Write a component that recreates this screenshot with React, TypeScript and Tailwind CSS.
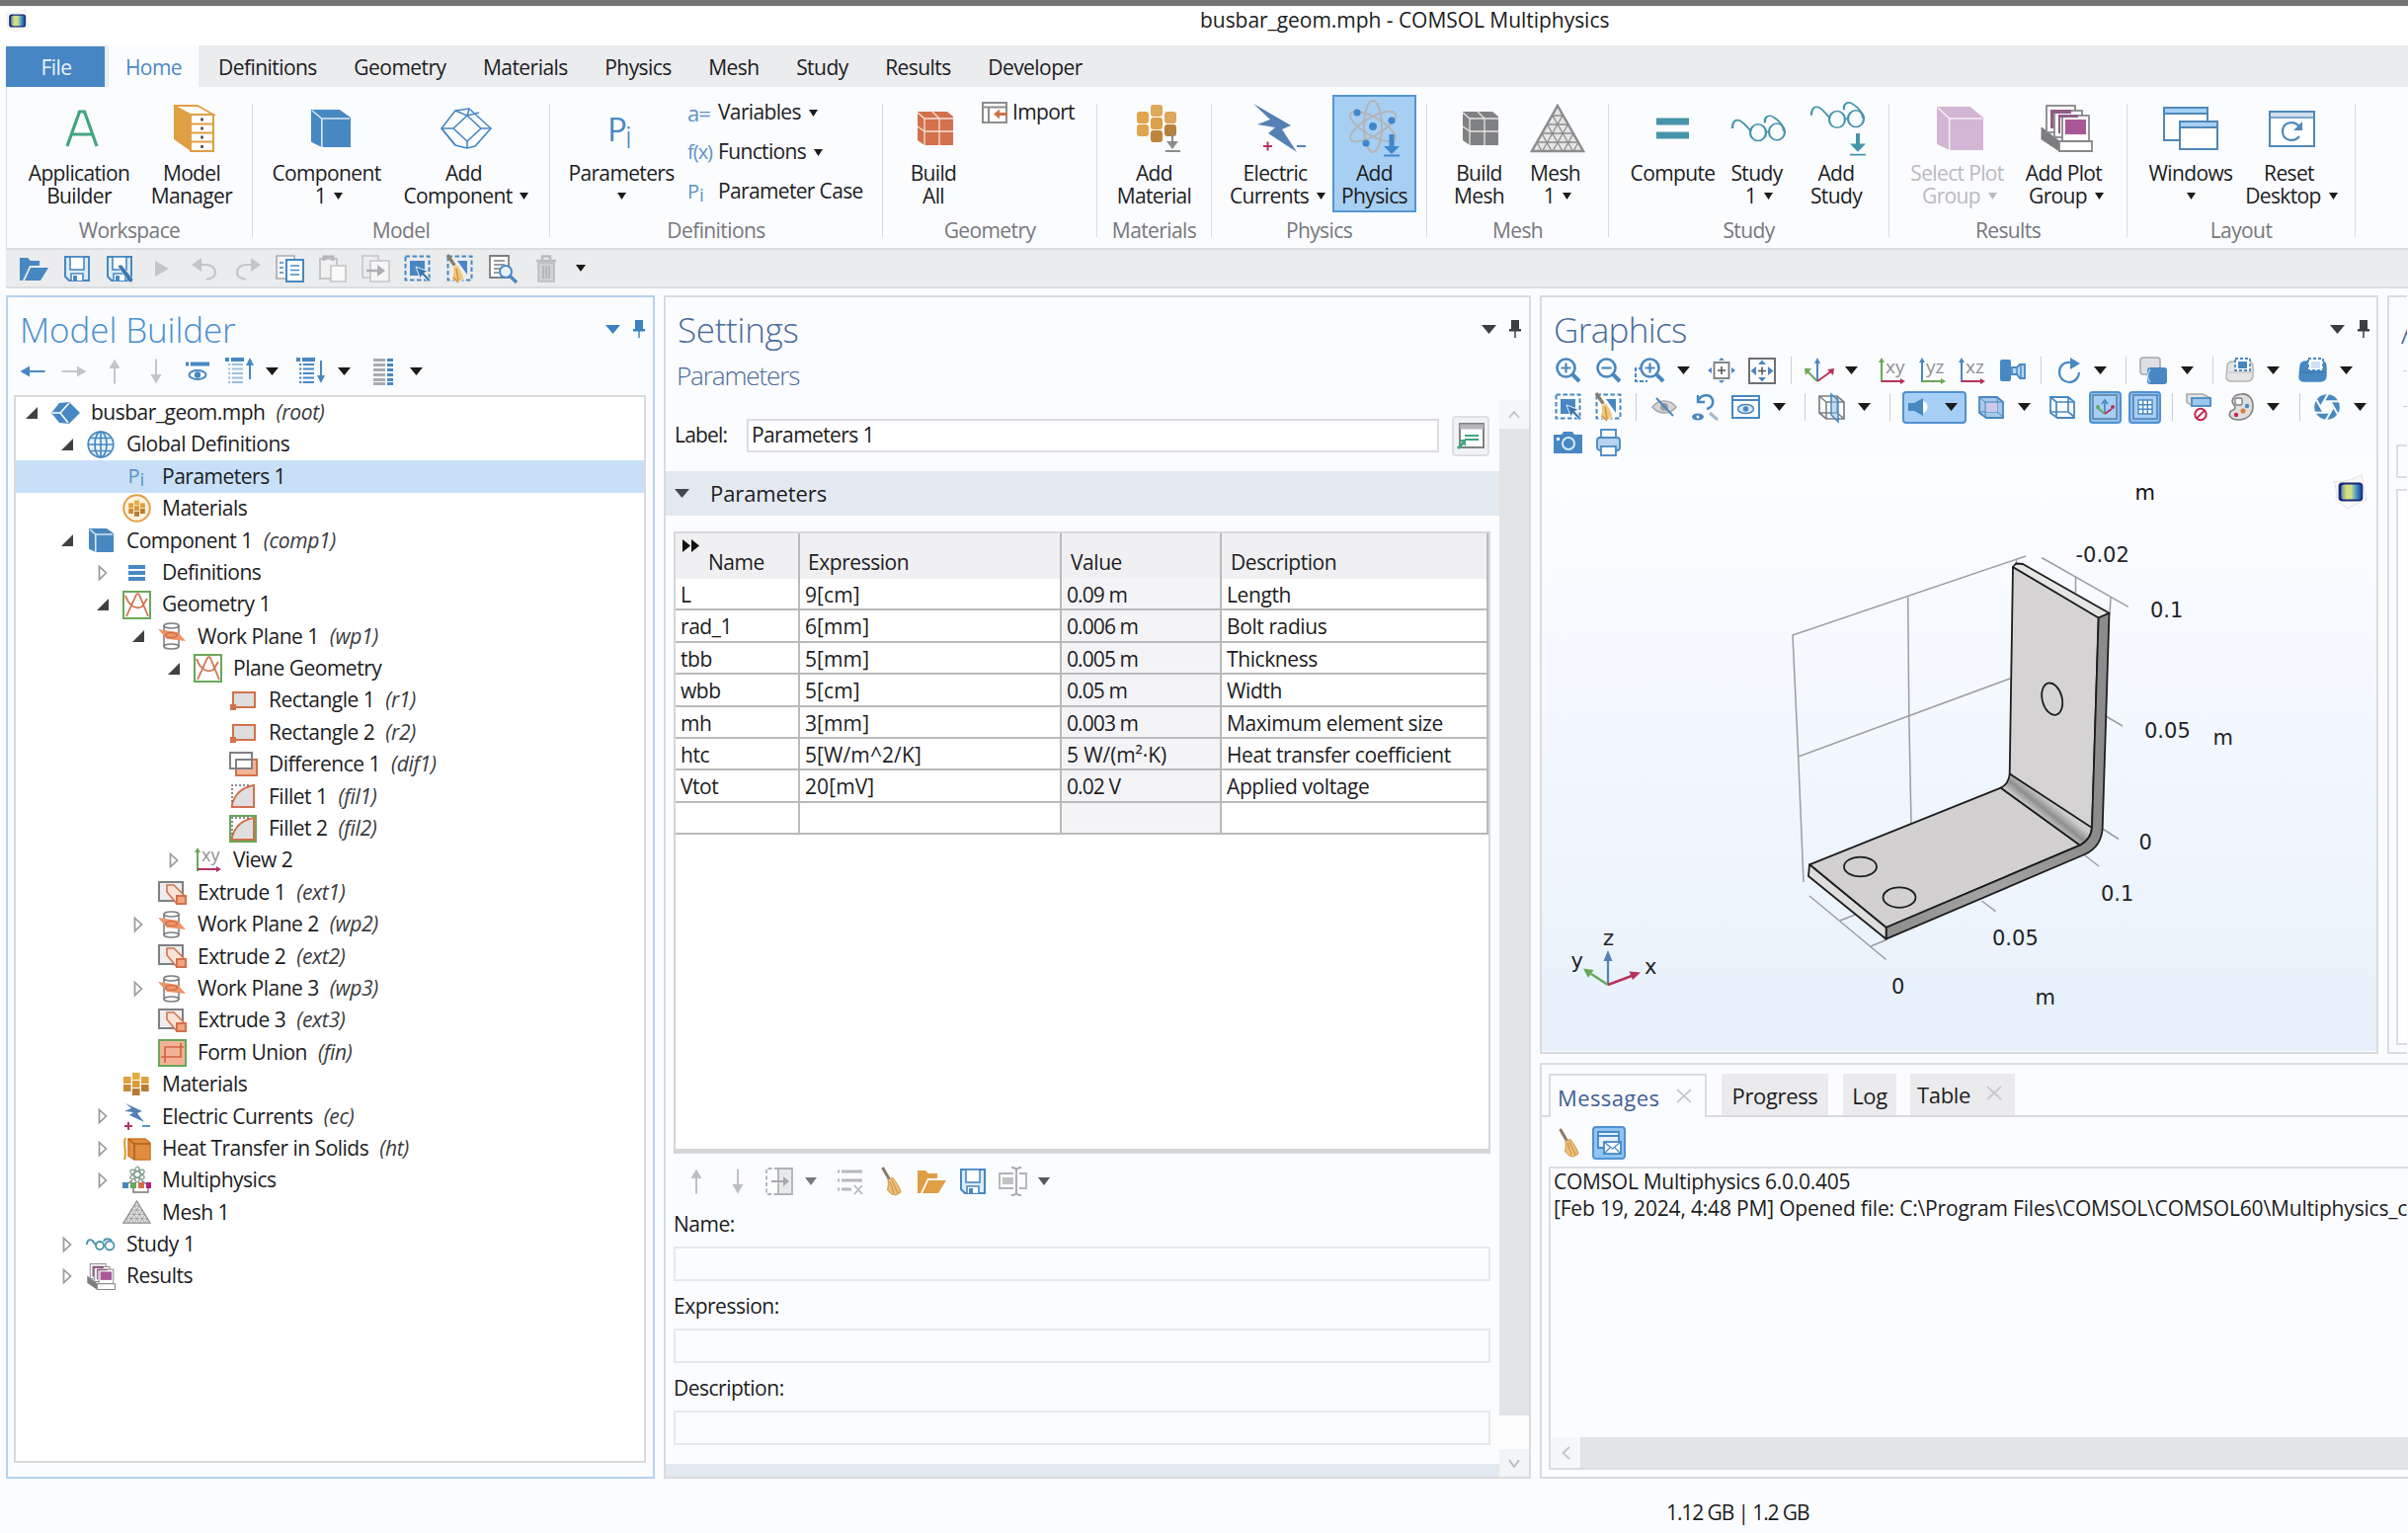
import type { ReactNode } from 'react';

const BLUE = '#4788c2';
const GRAY = '#8b8c8e';
const PALE = '#c3c5c8';
const ORANGE = '#df9f45';
const RUST = '#d2714c';
const TEAL = '#4694ab';
const MAGENTA = '#b8315f';
const GREEN = '#68a858';

function Svg({ w, h, children }: { w: number; h: number; children: ReactNode }) {
  return (
    <svg width={w} height={h} viewBox={`0 0 ${w} ${h}`} fill="none" className="shrink-0 overflow-visible">
      {children}
    </svg>
  );
}

/* ---------- small shared glyphs ---------- */

function Caret({ color = '#1b1b1b', w = 9, h = 7 }: { color?: string; w?: number; h?: number }) {
  return (
    <Svg w={w} h={h}>
      <path d={`M0 0H${w}L${w / 2} ${h}Z`} fill={color} />
    </Svg>
  );
}

function Pin({ color }: { color: string }) {
  return (
    <Svg w={13} h={18}>
      <path d="M3 0H11V9H13V11.500H1V9H3Z" fill={color} />
      <path d="M7 11V18" stroke={color} strokeWidth="1.500" />
    </Svg>
  );
}

function Arrow({ dir, color }: { dir: 'left' | 'right' | 'up' | 'down'; color: string }) {
  const turn = { up: 0, right: 90, down: 180, left: 270 }[dir];
  return (
    <Svg w={26} h={26}>
      <g transform={`rotate(${turn} 13 13)`}>
        <path d="M13 6V25.500" stroke={color} strokeWidth="2" />
        <path d="M13 0.500L18.500 10H7.500Z" fill={color} />
      </g>
    </Svg>
  );
}

function Logo({ s = 32 }: { s?: number }) {
  return (
    <svg width={s} height={s} viewBox="0 0 40 40" fill="none" className="shrink-0">
      <defs>
        <linearGradient id="logo" x1="9" y1="20" x2="34" y2="20" gradientUnits="userSpaceOnUse">
          <stop offset="0" stopColor="#3f78b8" />
          <stop offset="0.300" stopColor="#d6e07a" />
          <stop offset="0.500" stopColor="#cfdc8c" />
          <stop offset="0.750" stopColor="#3b8ec8" />
          <stop offset="1" stopColor="#142a80" />
        </linearGradient>
      </defs>
      <path d="M3 9C14 10 22 7 33 2C34 14 37 22 38 29C30 31 24 34 18 38C14 34 8 32 5 28C7 22 5 15 3 9Z" fill="#f9f9f8" stroke="#e2e2df" />
      <rect x="8" y="10" width="26" height="20" rx="4" fill="#16287c" />
      <rect x="11" y="12" width="22" height="16" rx="3" fill="url(#logo)" />
    </svg>
  );
}

function Broom({ small = false }: { small?: boolean }) {
  return (
    <Svg w={small ? 20 : 22} h={30}>
      <path d="M1.500 1L9 14" stroke="#8a7a68" strokeWidth="3" />
      <path d="M7 13L12 11.500C15 16 19 21 20 26L15 29L11 28L6.500 24C7.500 20 7.500 16 7 13Z" fill="#ecc27a" stroke="#cf9340" strokeWidth="1" />
      <path d="M9 15L13 27M11 14L17 27" stroke="#c98a3c" />
    </Svg>
  );
}

function Floppy({ pen = false }: { pen?: boolean }) {
  return (
    <Svg w={28} h={28}>
      <path d="M2 2H26V26H6L2 22Z" fill="#dcebf8" stroke={BLUE} strokeWidth="2" />
      <rect x="7" y="2" width="14" height="13" fill="#fff" stroke={BLUE} strokeWidth="1.600" />
      <path d="M8 26V19H20V26" fill="#fff" stroke={BLUE} strokeWidth="1.600" />
      <rect x="10" y="21" width="4" height="5" fill={BLUE} />
      {pen && <path d="M12 11L16 10L28 25L26 28L23 27Z" fill="#3b76ae" stroke="#e9eef4" strokeWidth="0.600" />}
    </Svg>
  );
}

function Folder({ color }: { color: string }) {
  return (
    <Svg w={29} h={24}>
      <path d="M0 1H8L11 4H20V9H10L3 24H0Z" fill={color} />
      <path d="M11 11H29L21 24H5Z" fill={color} />
    </Svg>
  );
}

function SelectBox({ broom = false }: { broom?: boolean }) {
  return (
    <Svg w={28} h={28}>
      <rect x="1.500" y="1.500" width="24" height="24" stroke={BLUE} strokeWidth="2" strokeDasharray="4.500 2.500" />
      {broom ? (
        <>
          <path d="M11 6H21V20Z" fill={BLUE} />
          <path d="M1 0L9 12" stroke="#8a7a68" strokeWidth="3.200" />
          <path d="M6 12L11 10C14 14 17 19 18 24L12 28L5 24C7 19 7 16 6 12Z" fill="#efc780" stroke="#fff" strokeWidth="0.800" />
          <path d="M10 14L12 26M7 23L12 28" stroke="#cf9340" strokeWidth="1.500" />
        </>
      ) : (
        <>
          <rect x="6" y="6" width="15" height="15" fill={BLUE} />
          <path d="M12 12L24 16.500L20.500 18.500L27 25.500L25 27.500L18.500 20.500L16.500 24Z" fill="#3b76ae" stroke="#eaf2fa" strokeWidth="1" />
        </>
      )}
    </Svg>
  );
}

/* ---------- ribbon icons ---------- */

function CubeSolid({ fill, w, h, top = 8 }: { fill: string; w: number; h: number; top?: number }) {
  return (
    <Svg w={w} h={h}>
      <path d={`M0 0H${w * 0.72}L${w} ${top}V${h}H${w * 0.27}L0 ${h * 0.86}Z`} fill={fill} />
      <path d={`M1 1L${w * 0.27} ${top + 1}H${w - 1}M${w * 0.27} ${top + 1}V${h}`} stroke="#fff" strokeWidth="1.600" opacity="0.8" />
    </Svg>
  );
}

function GridCube({ fill }: { fill: string }) {
  return (
    <Svg w={38} h={36}>
      <path d="M1 1H31L37 6V35H8L1 30Z" fill={fill} />
      <path d="M1 2L8 8H37M8 8V35M23 8V35M8 21H37M1 16L8 21M16 1L23 8" stroke="#fff" strokeWidth="1.300" opacity="0.8" />
    </Svg>
  );
}

function Cabinet() {
  return (
    <Svg w={42} h={48}>
      <path d="M1 1L18 10V47L1 35Z" fill={ORANGE} />
      <path d="M1 1H25L41 10H18Z" fill="#fff" stroke={ORANGE} strokeWidth="1.800" />
      <rect x="18" y="10" width="23" height="37" fill="#fff" stroke={ORANGE} strokeWidth="2" />
      <path d="M18 19.500H41M18 28.500H41M18 37.500H41" stroke={ORANGE} strokeWidth="2" />
      <path d="M29.500 13.500V16.500M29.500 22.500V25.500M29.500 31.500V34.500M29.500 41V44" stroke="#444" strokeWidth="2.500" />
    </Svg>
  );
}

function DiamondCube() {
  return (
    <Svg w={52} h={42}>
      <g stroke={BLUE} strokeWidth="1.600">
        <path d="M1 21L15 3L29 1L51 21L35 39L27 41L15 38Z" />
        <path d="M1 21L15 38M27 8L41 21L27 34L13 21ZM1 21H13M41 21H51M29 1L27 8L15 3M27 34V41M27 8L39 5" />
      </g>
    </Svg>
  );
}

function HexMaterial() {
  const cells: [number, number, string][] = [
    [14, 0, '#e0a85a'], [0, 7, '#e2a44c'], [28, 7, '#dda75c'], [14, 13, '#dba04a'],
    [0, 20, '#dfa44e'], [28, 20, '#b8813b'], [14, 26, '#c0843a'],
  ];
  return (
    <Svg w={44} h={48}>
      {cells.map(([x, y, c]) => (
        <rect key={`${x}-${y}`} x={x} y={y} width="12" height="12" rx="3" fill={c} />
      ))}
      <path d="M36 28V44M29 47H44" stroke={GRAY} strokeWidth="2.200" />
      <path d="M30 37H42L36 45Z" fill={GRAY} />
    </Svg>
  );
}

function Lightning() {
  return (
    <Svg w={54} h={50}>
      <path d="M0 0L38 22L29 26L44 49L15 30L22 24L4 21L17 16Z" fill="#5580b4" />
      <path d="M10 43H19M14.500 38.500V47.500" stroke={MAGENTA} strokeWidth="2" />
      <path d="M44 43H53" stroke="#5580b4" strokeWidth="2" />
    </Svg>
  );
}

function Atom() {
  return (
    <Svg w={52} h={58}>
      <g stroke="#b3b5b8" strokeWidth="2">
        <ellipse cx="24" cy="27" rx="9" ry="26" />
        <ellipse cx="24" cy="27" rx="9" ry="26" transform="rotate(60 24 27)" />
        <ellipse cx="24" cy="27" rx="9" ry="26" transform="rotate(-60 24 27)" />
      </g>
      <g fill="#3f86cc">
        <circle cx="24" cy="27" r="4" />
        <circle cx="8" cy="13" r="3.600" />
        <circle cx="43" cy="21" r="3.600" />
        <circle cx="17" cy="44" r="3.600" />
        <path d="M40.500 35H45.500V47H51L43 55L35 47H40.500Z" />
      </g>
      <path d="M35 56.500H51" stroke="#3f86cc" strokeWidth="2" />
    </Svg>
  );
}

function MeshTriangle({ w, h }: { w: number; h: number }) {
  return (
    <svg width={w} height={h} viewBox="0 0 56 50" fill="none" preserveAspectRatio="none" className="shrink-0">
      <path d="M28 2L54 48H2Z" fill="#e4e4e5" stroke={GRAY} strokeWidth="2.500" />
      <path d="M23 12H33M17.500 21H38.500M12 30H44M7 39H49M33 12L12.500 48M38.500 21L23 48M44 30L34 48M49 39L44 48M23 12L43.500 48M17.500 21L33 48M12 30L22 48M7 39L12 48" stroke={GRAY} strokeWidth="1.300" />
    </svg>
  );
}

function Glasses({ down = false }: { down?: boolean }) {
  return (
    <Svg w={56} h={down ? 80 : 42}>
      <g stroke={TEAL} strokeWidth="2.200">
        <path d="M1 21C1 11 4 7 9 10C14 14 16 20 20 25M34 13C33 4 38 0 43 5C49 10 53 18 53 25" />
        <ellipse cx="27" cy="27" rx="8" ry="12" />
        <ellipse cx="46" cy="26" rx="8" ry="12" />
        <path d="M35 26H38" />
      </g>
      {down && (
        <>
          <path d="M46 47H50V62H56L48 74L40 62H46Z" fill={TEAL} />
          <path d="M40 78H56" stroke={TEAL} strokeWidth="2.500" />
        </>
      )}
    </Svg>
  );
}

function PlotStack({ w = 53, h = 48 }: { w?: number; h?: number }) {
  return (
    <svg width={w} height={h} viewBox="0 0 53 48" fill="none" preserveAspectRatio="none" className="shrink-0">
      <path d="M1 23L19 37V47L1 35Z" fill="#7d7d80" stroke="#7d7d80" />
      <g fill="#fff" stroke="#88888b" strokeWidth="1.800">
        <rect x="6" y="1" width="29" height="27" />
        <rect x="14" y="6" width="28" height="27" />
        <rect x="22" y="11" width="27" height="26" />
      </g>
      <path d="M10 5H31V9H13V24H10ZM18 10H38V13H20V29H18Z" fill="#8f5d86" />
      <rect x="25" y="15" width="21" height="15" fill="#a85898" />
      <path d="M19 37H52V47H19Z" fill="#fff" stroke="#88888b" strokeWidth="1.800" />
    </svg>
  );
}

function WindowsIcon() {
  return (
    <Svg w={56} h={44}>
      <g stroke="#5088b8" strokeWidth="2">
        <rect x="1" y="1" width="44" height="33" fill="#fff" />
        <rect x="1" y="1" width="44" height="6" fill="#a6d0f5" />
        <rect x="17" y="15" width="38" height="28" fill="#fff" />
        <rect x="17" y="15" width="38" height="6" fill="#a6d0f5" />
      </g>
    </Svg>
  );
}

function ResetIcon() {
  return (
    <Svg w={47} h={37}>
      <rect x="1" y="1" width="45" height="35" fill="#fff" stroke="#5088b8" strokeWidth="2" />
      <path d="M2 2H45V6H2Z" fill="#cfdff0" />
      <path d="M1 7H46" stroke="#5088b8" strokeWidth="1.500" />
      <path d="M31 26C25 33 14 30 14 21C14 12 25 9 31 16" stroke="#5088b8" strokeWidth="2.200" />
      <path d="M34 11V20H25Z" fill="#5088b8" />
    </Svg>
  );
}

function ImportIcon() {
  return (
    <Svg w={26} h={22}>
      <rect x="1" y="1" width="24" height="20" fill="#fff" stroke={GRAY} strokeWidth="2" />
      <path d="M1 5.500H25M7 6V21" stroke={GRAY} strokeWidth="2" />
      <path d="M12 12.500L18 7.500V11H26V14H18V17.500Z" fill={RUST} />
    </Svg>
  );
}

function Pi({ big = false }: { big?: boolean }) {
  return big ? (
    <span className="flex leading-none text-[#4788c2]">
      <span className="text-[33px]">P</span>
      <span className="-ml-0.5 translate-y-2 text-[32px] font-light">i</span>
    </span>
  ) : (
    <span className="flex text-[20px] leading-none text-[#5b92c8]">
      P<span className="translate-y-1 text-[19px]">i</span>
    </span>
  );
}

/* ---------- ribbon ---------- */

function BigButton({
  icon, lines, className, arrow = false, active = false, muted = false,
}: { icon: ReactNode; lines: [string, string?]; className: string; arrow?: boolean; active?: boolean; muted?: boolean }) {
  const tone = muted ? 'text-[#b9babd]' : 'text-[#1c1c1e]';
  const frame = active ? 'border-[#5296d6] bg-[#a7cff3]' : 'border-transparent';
  return (
    <button className={`flex h-[119px] shrink-0 flex-col items-center border-2 ${frame} ${tone} ${className}`}>
      <span className="flex h-[65.5px] items-center justify-center pb-[1.5px]">{icon}</span>
      <span className={`whitespace-nowrap text-[21px] leading-[23.4px] tracking-[-0.65px] ${arrow && lines[1] ? 'pr-[5px]' : ''}`}>{lines[0]}</span>
      <span className="flex h-[23.4px] items-center whitespace-nowrap text-[21px] leading-[23.4px] tracking-[-0.65px]">
        {lines[1]}
        {arrow && (
          <span className={lines[1] ? 'ml-[8px]' : ''}>
            <Caret color={muted ? '#b9babd' : '#1b1b1b'} />
          </span>
        )}
      </span>
    </button>
  );
}

function Group({ name, className, children }: { name: string; className: string; children: ReactNode }) {
  return (
    <section className={`flex h-full shrink-0 flex-col ${className}`}>
      <div className="flex h-[128px] pt-2">{children}</div>
      <div className="h-9 text-center text-[21px] leading-9 tracking-[-0.6px] text-[#77787b]">{name}</div>
    </section>
  );
}

function Divider() {
  return <div className="mt-[17px] h-[135px] w-px shrink-0 bg-[#d9dadc]" />;
}

function SmallCommand({ icon, label, arrow = false }: { icon: ReactNode; label: string; arrow?: boolean }) {
  return (
    <div className="flex h-10 items-center">
      <span className="flex w-[31px] shrink-0 items-center">{icon}</span>
      <span className="whitespace-nowrap text-[21px] tracking-[-0.65px] text-[#1c1c1e]">{label}</span>
      {arrow && <span className="ml-2"><Caret /></span>}
    </div>
  );
}

function Ribbon() {
  return (
    <div className="ml-[6px] flex h-[163px] shrink-0 border-l border-[#d9dadc]">
      <Group name="Workspace" className="w-[248px]">
        <BigButton className="ml-[11px] w-[124px]" icon={<span className="ml-[6px]"><Svg w={32} h={36}><path d="M1 36L13.500 1H18.500L31 36M6 24H26" stroke="#42a583" strokeWidth="3.200" /></Svg></span>} lines={['Application', 'Builder']} />
        <BigButton className="w-[104px]" icon={<span className="ml-1"><Cabinet /></span>} lines={['Model', 'Manager']} />
      </Group>
      <Divider />
      <Group name="Model" className="w-[300px]">
        <BigButton className="ml-[12px] w-[130px]" icon={<span className="ml-[3px]"><CubeSolid fill={BLUE} w={40} h={38} /></span>} lines={['Component', '1']} arrow />
        <BigButton className="w-[148px]" icon={<DiamondCube />} lines={['Add', 'Component']} arrow />
      </Group>
      <Divider />
      <Group name="Definitions" className="w-[336px]">
        <BigButton className="ml-[12px] w-[120px]" icon={<span className="mr-[3px]"><Pi big /></span>} lines={['Parameters']} arrow />
        <div className="ml-[7px] -mt-[2px]">
          <SmallCommand icon={<span className="text-[22px] leading-none tracking-[-1px] text-[#5b92c8]">a=</span>} label="Variables" arrow />
          <SmallCommand icon={<span className="text-[20px] leading-none tracking-[-1px] text-[#5b92c8]">f(x)</span>} label="Functions" arrow />
          <SmallCommand icon={<Pi />} label="Parameter Case" />
        </div>
      </Group>
      <Divider />
      <Group name="Geometry" className="w-[216px]">
        <BigButton className="ml-[11px] w-[80px]" icon={<span className="ml-[3px]"><GridCube fill={RUST} /></span>} lines={['Build', 'All']} />
        <div className="ml-[9px] -mt-[2px]">
          <SmallCommand icon={<ImportIcon />} label="Import" />
        </div>
      </Group>
      <Divider />
      <Group name="Materials" className="w-[115px]">
        <BigButton className="w-[115px]" icon={<span className="ml-[8px]"><HexMaterial /></span>} lines={['Add', 'Material']} />
      </Group>
      <Divider />
      <Group name="Physics" className="w-[217px]">
        <BigButton className="ml-[11px] w-[111px]" icon={<span className="ml-1"><Lightning /></span>} lines={['Electric', 'Currents']} arrow />
        <BigButton className="w-[85px]" icon={<Atom />} lines={['Add', 'Physics']} active />
      </Group>
      <Divider />
      <Group name="Mesh" className="w-[183px]">
        <BigButton className="ml-[13px] w-[79px]" icon={<span className="ml-[3px]"><GridCube fill="#808183" /></span>} lines={['Build', 'Mesh']} />
        <BigButton className="w-[80px]" icon={<MeshTriangle w={56} h={50} />} lines={['Mesh', '1']} arrow />
      </Group>
      <Divider />
      <Group name="Study" className="w-[283px]">
        <BigButton className="ml-[10px] w-[109px]" icon={<Svg w={33} h={22}><path d="M0 4H33M0 18H33" stroke={TEAL} strokeWidth="7" /></Svg>} lines={['Compute']} />
        <BigButton className="w-[66px]" icon={<span className="scale-y-[0.7]"><Glasses /></span>} lines={['Study', '1']} arrow />
        <BigButton className="w-[90px]" icon={<span className="ml-1 scale-y-[0.7]"><Glasses down /></span>} lines={['Add', 'Study']} />
      </Group>
      <Divider />
      <Group name="Results" className="w-[240px]">
        <BigButton className="ml-[9px] w-[124px]" icon={<CubeSolid fill="#d3b6d3" w={47} h={44} top={11} />} lines={['Select Plot', 'Group']} arrow muted />
        <BigButton className="w-[92px]" icon={<PlotStack />} lines={['Add Plot', 'Group']} arrow />
      </Group>
      <Divider />
      <Group name="Layout" className="w-[230px]">
        <BigButton className="ml-[14px] w-[100px]" icon={<WindowsIcon />} lines={['Windows']} arrow />
        <BigButton className="w-[104px]" icon={<ResetIcon />} lines={['Reset', 'Desktop']} arrow />
      </Group>
      <Divider />
    </div>
  );
}

const MENU = ['Definitions', 'Geometry', 'Materials', 'Physics', 'Mesh', 'Study', 'Results', 'Developer'];

function MenuTabs() {
  return (
    <nav className="ml-[6px] flex h-[42px] shrink-0 bg-[#ebecee] text-[21px] leading-[45px] tracking-[-0.55px] text-[#1c1c1e]">
      <div className="mt-px h-[41px] w-[100px] bg-[#4686c4] pl-[2px] text-center leading-[43px] text-[#eaf3fb]">File</div>
      <div className="ml-[4px] w-[91px] bg-[#fbfcfe] text-center text-[#4e8ac4]">Home</div>
      {MENU.map((m) => (
        <div key={m} className="pl-[20px] pr-[17.500px]">{m}</div>
      ))}
    </nav>
  );
}

function QuickAccess() {
  const items: ReactNode[] = [
    <Folder color={BLUE} />,
    <Floppy />,
    <Floppy pen />,
    <Svg w={16} h={16}><path d="M1 0L15 8L1 16Z" fill={PALE} /></Svg>,
    <Svg w={28} h={24}><path d="M4 8H15C22 8 25 12 25 16C25 20 21 22 16 23" stroke={PALE} strokeWidth="2.200" /><path d="M1 8L11 1V15Z" fill={PALE} /></Svg>,
    <Svg w={28} h={24}><path d="M24 8H13C6 8 3 12 3 16C3 20 7 22 12 23" stroke={PALE} strokeWidth="2.200" /><path d="M27 8L17 1V15Z" fill={PALE} /></Svg>,
    <Svg w={30} h={28}><path d="M1 1H19V24H1Z" fill="#f6f6f7" stroke="#a9abae" strokeWidth="1.600" /><path d="M11 5H28V27H11Z" fill="#fff" stroke={BLUE} strokeWidth="2" /><path d="M15 11H24M15 15.500H24M15 20H24M4 8H8M4 13H8M4 18H8" stroke={BLUE} strokeWidth="1.700" /></Svg>,
    <Svg w={28} h={28}><path d="M1 4H18V24H1Z" fill="#f0f0f1" stroke={PALE} strokeWidth="2" /><path d="M5 6V2H14V6" stroke="#b5b7ba" strokeWidth="3" /><path d="M12 11H27V27H12Z" fill="#fafafa" stroke={PALE} strokeWidth="1.600" /></Svg>,
    <Svg w={29} h={28}><path d="M1 1H17V23H1Z" stroke={PALE} strokeWidth="1.600" /><path d="M9 6H28V27H9Z" fill="#f6f6f7" stroke={PALE} strokeWidth="1.600" /><path d="M5 16H17" stroke="#adafb2" strokeWidth="2.500" /><path d="M16 10L24 16L16 22Z" fill="#adafb2" /></Svg>,
    <SelectBox />,
    <SelectBox broom />,
    <Svg w={29} h={28}><path d="M1 1H20V23H1Z" fill="#fff" stroke="#7c7e81" strokeWidth="1.800" /><path d="M5 6H16M5 10H16M5 14H11M5 18H10" stroke="#7c7e81" strokeWidth="1.500" /><circle cx="17" cy="17" r="6" fill="#e6f1fb" stroke={BLUE} strokeWidth="2" /><path d="M21 21L28 28" stroke={BLUE} strokeWidth="3.200" /></Svg>,
    <Svg w={22} h={28}><path d="M1 6H21M7 5V1.500H15V5" stroke="#b9bbbe" strokeWidth="2.400" /><path d="M3 8H19V27H3Z" fill="#cfd0d2" stroke="#b9bbbe" strokeWidth="1.600" /><path d="M8 11V24M11 11V24M14 11V24" stroke="#a7a9ac" strokeWidth="1.300" /></Svg>,
  ];
  return (
    <div className="ml-[6px] flex h-[41px] shrink-0 items-center border-y-2 border-[#dcdddf] bg-[#ebecee] pl-[7px]">
      {items.map((icon, i) => (
        <span key={i} className="flex w-[43.2px] shrink-0 items-center justify-center">{icon}</span>
      ))}
      <span className="ml-[9px]"><Caret w={10} h={7} /></span>
    </div>
  );
}

/* ---------- model tree ---------- */

type Kind =
  | 'root' | 'globe' | 'pi' | 'gmat' | 'comp' | 'defs' | 'geom' | 'wp' | 'rect' | 'diff' | 'fillet' | 'filletOn'
  | 'view' | 'ext' | 'union' | 'mat' | 'ec' | 'ht' | 'multi' | 'mesh' | 'study' | 'results';

function HexSmall() {
  const cells: [number, number, string][] = [
    [9, 0, '#e3ac42'], [0, 4, '#dfa03c'], [18, 4, '#dfa03c'], [9, 8, '#d9983a'],
    [0, 12, '#c98838'], [18, 12, '#b97b34'], [9, 16, '#b97b34'],
  ];
  return (
    <>
      {cells.map(([x, y, c]) => (
        <rect key={`${x}-${y}`} x={x} y={y + 1} width="7.600" height="7" fill={c} />
      ))}
    </>
  );
}

function FilletGlyph({ on }: { on: boolean }) {
  return (
    <Svg w={28} h={28}>
      {on && <rect x="1" y="1" width="26" height="26" fill="#fff" stroke={GREEN} strokeWidth="2" />}
      <path d="M3 25V22C6 12 13 5 25 3V25Z" fill="#e0dfe0" stroke={RUST} strokeWidth="2" />
      <path d="M3 20V3H22" stroke="#6a6a6a" strokeWidth="1.600" strokeDasharray="2 2" />
    </Svg>
  );
}

function TreeIcon({ kind }: { kind: Kind }) {
  switch (kind) {
    case 'root':
      return <Svg w={29} h={22}><path d="M0 11L8 1L18 0L29 11L18 22L8 21Z" fill={BLUE} /><path d="M1 11H9M9 11L18 1M9 11L17 21" stroke="#fff" strokeWidth="1.600" /></Svg>;
    case 'globe':
      return <Svg w={28} h={28}><g stroke={BLUE} strokeWidth="1.700"><circle cx="14" cy="14" r="12.800" fill="#eaf3fb" /><ellipse cx="14" cy="14" rx="6" ry="12.800" /><path d="M14 1V27M1 14H27M3.500 7.500H24.500M3.500 20.500H24.500" /></g></Svg>;
    case 'pi':
      return <Pi />;
    case 'gmat':
      return <Svg w={29} h={29}><circle cx="14.500" cy="14.500" r="13.300" fill="#fdf3e0" stroke={ORANGE} strokeWidth="2" /><g transform="translate(6.200 5.800) scale(0.65 0.71)"><HexSmall /></g></Svg>;
    case 'comp':
      return <CubeSolid fill={BLUE} w={25} h={24} top={5} />;
    case 'defs':
      return <Svg w={17} h={16}><path d="M0 2H17M0 8H17M0 14H17" stroke={BLUE} strokeWidth="4" /></Svg>;
    case 'geom':
      return <Svg w={29} h={29}><rect x="1" y="1" width="27" height="27" fill="#fff" stroke={GREEN} strokeWidth="2" /><path d="M4 26L14 4L15.500 3L17 4L26 26M3 5C6 14 13 20 20 16L25 8" stroke={RUST} strokeWidth="1.800" /></Svg>;
    case 'wp':
      return <Svg w={28} h={28}><g stroke="#7f8083" strokeWidth="1.600"><path d="M6 3V25M21 3V25" /><ellipse cx="13.500" cy="3.500" rx="7.500" ry="2.500" /><ellipse cx="13.500" cy="24.500" rx="7.500" ry="2.500" /></g><path d="M0 7L20 10L28 19L9 17Z" fill="#ec9468" /><ellipse cx="13.500" cy="13" rx="6" ry="2.500" stroke="#c45f39" /></Svg>;
    case 'rect':
      return <Svg w={26} h={20}><path d="M3 2H25V17H3Z" fill="#dedcdd" stroke={RUST} strokeWidth="2" /><rect x="0" y="14" width="6" height="6" fill={RUST} /></Svg>;
    case 'diff':
      return <Svg w={29} h={25}><path d="M7 8H28V24H7Z" fill="#f2b594" stroke={RUST} strokeWidth="2" /><rect x="1" y="1" width="22" height="16" fill="#fff" stroke="#7f8083" strokeWidth="2" /><path d="M7 17V8H22" stroke="#7f8083" strokeWidth="2" /></Svg>;
    case 'fillet':
      return <FilletGlyph on={false} />;
    case 'filletOn':
      return <FilletGlyph on />;
    case 'view':
      return <Svg w={28} h={26}><path d="M4 24V2" stroke={GREEN} strokeWidth="2" /><path d="M4 0L7 5H1Z" fill={GREEN} /><path d="M4 22H25" stroke={MAGENTA} strokeWidth="2" /><path d="M28 22L23 25V19Z" fill={MAGENTA} /><text x="8" y="14" fontSize="18" fill="#909194" fontFamily="Open Sans, sans-serif">xy</text></Svg>;
    case 'ext':
      return <Svg w={29} h={26}><rect x="1" y="2" width="24" height="19" fill="#eeeeee" stroke="#7f8083" strokeWidth="2" /><path d="M9 5H16L27 16V24H19L9 12Z" fill="#fbe4d6" stroke={RUST} strokeWidth="1.600" /><rect x="19" y="16" width="9" height="8" fill="#f0a480" stroke={RUST} strokeWidth="2" /></Svg>;
    case 'union':
      return <Svg w={29} h={28}><rect x="1" y="1" width="27" height="26" fill="#f3b296" stroke={GREEN} strokeWidth="2" /><path d="M7 8H23V18H7ZM7 18V24M7 18H3M23 8H26M23 8V4" stroke="#cf6440" strokeWidth="1.700" /></Svg>;
    case 'mat':
      return <Svg w={26} h={26}><HexSmall /></Svg>;
    case 'ec':
      return <Svg w={28} h={28}><path d="M3 1L20 9L15 11L22 20L7 13L11 10L2 9L9 6Z" fill="#5580b4" /><path d="M2 24H10M6 20V28" stroke={MAGENTA} strokeWidth="2" /><path d="M20 24H28" stroke={BLUE} strokeWidth="1.800" /></Svg>;
    case 'ht':
      return <Svg w={29} h={24}><path d="M3 1C0 7 5 14 2 23" stroke={ORANGE} strokeWidth="2.200" /><path d="M6 2H23L28 6V23H12L6 19Z" fill="#e08e3c" stroke="#c97628" strokeWidth="1.500" /><path d="M6 2L12 7H28M12 7V23" stroke="#a85f1f" strokeWidth="1.500" /></Svg>;
    case 'multi':
      return <Svg w={29} h={28}><g stroke="#7d9a88" strokeWidth="1.200"><ellipse cx="15" cy="8" rx="3" ry="8" /><ellipse cx="15" cy="8" rx="3" ry="8" transform="rotate(60 15 8)" /><ellipse cx="15" cy="8" rx="3" ry="8" transform="rotate(-60 15 8)" /></g><path d="M3 19L10 14M26 19L19 14M11 20V26H26V20" stroke="#777" strokeWidth="1.400" /><rect x="0" y="16" width="6" height="6" fill={BLUE} /><rect x="8" y="16" width="6" height="6" fill={GREEN} /><rect x="16" y="16" width="6" height="6" fill={RUST} /><rect x="24" y="16" width="5" height="6" fill="#b0227c" /></Svg>;
    case 'mesh':
      return <MeshTriangle w={29} h={24} />;
    case 'study':
      return <Svg w={30} h={14}><g stroke={TEAL} strokeWidth="1.800"><path d="M1 7C1 1 6 1 8 5L11 8M18 4C19 0 24 1 26 3" /><circle cx="14" cy="8" r="4" /><circle cx="24" cy="8" r="4.500" /></g></Svg>;
    case 'results':
      return <PlotStack w={29} h={27} />;
  }
}

type Row = { level: number; kind: Kind; label: string; tag?: string; open?: boolean };

const TREE: Row[] = [
  { level: 0, kind: 'root', label: 'busbar_geom.mph', tag: 'root', open: true },
  { level: 1, kind: 'globe', label: 'Global Definitions', open: true },
  { level: 2, kind: 'pi', label: 'Parameters 1' },
  { level: 2, kind: 'gmat', label: 'Materials' },
  { level: 1, kind: 'comp', label: 'Component 1', tag: 'comp1', open: true },
  { level: 2, kind: 'defs', label: 'Definitions', open: false },
  { level: 2, kind: 'geom', label: 'Geometry 1', open: true },
  { level: 3, kind: 'wp', label: 'Work Plane 1', tag: 'wp1', open: true },
  { level: 4, kind: 'geom', label: 'Plane Geometry', open: true },
  { level: 5, kind: 'rect', label: 'Rectangle 1', tag: 'r1' },
  { level: 5, kind: 'rect', label: 'Rectangle 2', tag: 'r2' },
  { level: 5, kind: 'diff', label: 'Difference 1', tag: 'dif1' },
  { level: 5, kind: 'fillet', label: 'Fillet 1', tag: 'fil1' },
  { level: 5, kind: 'filletOn', label: 'Fillet 2', tag: 'fil2' },
  { level: 4, kind: 'view', label: 'View 2', open: false },
  { level: 3, kind: 'ext', label: 'Extrude 1', tag: 'ext1' },
  { level: 3, kind: 'wp', label: 'Work Plane 2', tag: 'wp2', open: false },
  { level: 3, kind: 'ext', label: 'Extrude 2', tag: 'ext2' },
  { level: 3, kind: 'wp', label: 'Work Plane 3', tag: 'wp3', open: false },
  { level: 3, kind: 'ext', label: 'Extrude 3', tag: 'ext3' },
  { level: 3, kind: 'union', label: 'Form Union', tag: 'fin' },
  { level: 2, kind: 'mat', label: 'Materials' },
  { level: 2, kind: 'ec', label: 'Electric Currents', tag: 'ec', open: false },
  { level: 2, kind: 'ht', label: 'Heat Transfer in Solids', tag: 'ht', open: false },
  { level: 2, kind: 'multi', label: 'Multiphysics', open: false },
  { level: 2, kind: 'mesh', label: 'Mesh 1' },
  { level: 1, kind: 'study', label: 'Study 1', open: false },
  { level: 1, kind: 'results', label: 'Results', open: false },
];

const INDENT = ['pl-[2px]', 'pl-[38px]', 'pl-[74px]', 'pl-[110px]', 'pl-[146px]', 'pl-[182px]'];

function TreeRow({ row, selected }: { row: Row; selected: boolean }) {
  return (
    <div className={`flex h-[32.4px] items-center ${INDENT[row.level]} ${selected ? 'bg-[#c8e0f7]' : ''}`}>
      <span className="flex w-7 shrink-0 justify-center">
        {row.open === true && <Svg w={12} h={12}><path d="M12 0V12H0Z" fill="#3f4143" /></Svg>}
        {row.open === false && <Svg w={10} h={16}><path d="M1.500 1.500L8.500 8L1.500 14.500Z" fill="#fff" stroke="#98999c" strokeWidth="1.700" /></Svg>}
      </span>
      <span className="flex w-10 shrink-0 justify-center">
        <TreeIcon kind={row.kind} />
      </span>
      <span className="ml-[6px] whitespace-nowrap text-[21px] tracking-[-0.5px] text-[#1c1c1e]">{row.label}</span>
      {row.tag && <span className="ml-[11px] text-[21px] italic tracking-[-0.3px] text-[#3a3b3d]">({row.tag})</span>}
    </div>
  );
}

function ListIcon({ dir }: { dir: 'up' | 'down' }) {
  const up = dir === 'up';
  return (
    <Svg w={29} h={30}>
      <path d="M0 3H4M6 3H19" stroke={BLUE} strokeWidth="4" />
      <path d="M3 8H18M3 12.500H18M3 17H18M3 21.500H18M3 26H18" stroke={up ? '#9bbfdf' : BLUE} strokeWidth="2" />
      <path d="M6 6V28" stroke="#fff" strokeWidth="1.500" />
      {up ? <><path d="M25 6V23" stroke={BLUE} strokeWidth="2" /><path d="M25 1L29 9H21Z" fill={BLUE} /></> : <><path d="M25 4V22" stroke={BLUE} strokeWidth="2" /><path d="M25 27L29 19H21Z" fill={BLUE} /></>}
    </Svg>
  );
}

function PanelTitle({ text, active = false, tracking }: { text: string; active?: boolean; tracking: string }) {
  return (
    <div className="flex h-[64px] items-center">
      <h2 className={`grow text-[35px] font-light leading-[64px] ${tracking} pt-[2px] ${active ? 'text-[#4a8fd0]' : 'text-[#4a6b9b]'}`}>{text}</h2>
      <span className="mr-[12px]"><Caret color={active ? '#3c82c2' : '#3c3e40'} w={15} h={9} /></span>
      <span className="mr-[8px]"><Pin color={active ? '#3c82c2' : '#3c3e40'} /></span>
    </div>
  );
}

function ModelBuilder() {
  return (
    <section className="flex h-[1198px] w-[657px] shrink-0 flex-col border-2 border-[#b5d3ee] pl-[6px] pr-[7px]">
      <div className="-mr-[7px] pl-[6px]"><PanelTitle text="Model Builder" active tracking="tracking-[-0.1px]" /></div>
      <div className="flex h-[34.5px] items-center pb-[12px] pl-[6px]">
        <Arrow dir="left" color={BLUE} />
        <span className="ml-[16px]"><Arrow dir="right" color={PALE} /></span>
        <span className="ml-[15px]"><Arrow dir="up" color={PALE} /></span>
        <span className="ml-[16px]"><Arrow dir="down" color={PALE} /></span>
        <span className="ml-[17px]">
          <Svg w={24} h={20}><path d="M0 2.500H3M5 2.500H24" stroke={BLUE} strokeWidth="4" /><ellipse cx="12" cy="13.500" rx="8.500" ry="4.500" fill="#fff" stroke={BLUE} strokeWidth="2" /><circle cx="12" cy="13.500" r="3.200" fill={BLUE} /></Svg>
        </span>
        <span className="ml-[16px]"><ListIcon dir="up" /></span>
        <span className="ml-[12px]"><Caret w={13} h={8} /></span>
        <span className="ml-[18px]"><ListIcon dir="down" /></span>
        <span className="ml-[13px]"><Caret w={13} h={8} /></span>
        <span className="ml-[23px]">
          <Svg w={20} h={28}><path d="M0 2.500H12M0 7.500H12M0 12.500H12M0 17.500H12M0 22.500H12M0 26.500H12" stroke="#a8aaad" strokeWidth="3" /><path d="M14 2.500H20M14 7.500H20M14 12.500H20M14 17.500H20M14 22.500H20M14 26.500H20" stroke={BLUE} strokeWidth="3" /></Svg>
        </span>
        <span className="ml-[17px]"><Caret w={13} h={8} /></span>
      </div>
      <div className="mb-[14px] grow border-2 border-[#d9dadc] bg-white">
        {TREE.map((row, i) => (
          <TreeRow key={i} row={row} selected={i === 2} />
        ))}
      </div>
    </section>
  );
}

/* ---------- settings ---------- */

const PARAMS: [string, string, ReactNode, string][] = [
  ['L', '9[cm]', '0.09 m', 'Length'],
  ['rad_1', '6[mm]', '0.006 m', 'Bolt radius'],
  ['tbb', '5[mm]', '0.005 m', 'Thickness'],
  ['wbb', '5[cm]', '0.05 m', 'Width'],
  ['mh', '3[mm]', '0.003 m', 'Maximum element size'],
  ['htc', '5[W/m^2/K]', <span className="tracking-[-0.1px]">5 W/(m²·K)</span>, 'Heat transfer coefficient'],
  ['Vtot', '20[mV]', '0.02 V', 'Applied voltage'],
  ['', '', '', ''],
];

const GRID = 'grid grid-cols-[126px_265px_162px_270px]';

function ParamTable() {
  return (
    <div className="ml-[8px] h-[630px] w-[827px] border-2 border-b-[5px] border-[#d6d7d9] bg-white text-[21px] tracking-[-0.45px] text-[#1c1c1e]">
      <div className={`${GRID} h-[46px] bg-[#f0f0f2] leading-[24px]`}>
        <div className="flex border-r-2 border-[#b9babc] pl-[7px] pt-[6px]">
          <Svg w={17} h={13}><path d="M0 0L8 6.500L0 13ZM9 0L17 6.500L9 13Z" fill="#111" /></Svg>
          <span className="ml-[9px] pt-[11px]">Name</span>
        </div>
        <div className="border-r-2 border-[#b9babc] pl-[8px] pt-[17px]">Expression</div>
        <div className="border-r-2 border-[#b9babc] pl-[9px] pt-[17px]">Value</div>
        <div className="border-r-2 border-[#b9babc] pl-[9px] pt-[17px]">Description</div>
      </div>
      {PARAMS.map((p, i) => (
        <div key={i} className={`${GRID} h-[32.4px] leading-[33px]`}>
          <div className="h-[32.4px] border-b-2 border-r-2 border-[#b9babc] pl-[5px]">{p[0]}</div>
          <div className="h-[32.4px] border-b-2 border-r-2 border-[#b9babc] pl-[5px] tracking-[0.1px]">{p[1]}</div>
          <div className="h-[32.4px] border-b-2 border-r-2 border-[#b9babc] bg-[#f4f4f6] pl-[5px] tracking-[-0.9px]">{p[2]}</div>
          <div className="h-[32.4px] border-b-2 border-r-2 border-[#b9babc] pl-[5px] tracking-[-0.4px]">{p[3]}</div>
        </div>
      ))}
    </div>
  );
}

function TableTools() {
  return (
    <div className="flex h-[56px] items-center pl-[18px]">
      <Arrow dir="up" color="#bdbfc1" />
      <span className="ml-[16px]"><Arrow dir="down" color="#bdbfc1" /></span>
      <span className="ml-[15px]">
        <Svg w={28} h={28}><path d="M13 1H1V27H13" stroke="#b0b2b5" strokeWidth="1.800" strokeDasharray="4 2.500" /><path d="M13 1H27V27H13Z" fill="#e8e9ea" stroke="#b0b2b5" strokeWidth="1.800" /><path d="M6 14H20" stroke="#a6a8ab" strokeWidth="2" /><path d="M18 9L24 14L18 19Z" fill="#a6a8ab" /></Svg>
      </span>
      <span className="ml-[12px]"><Caret color="#77797c" w={12} h={8} /></span>
      <span className="ml-[21px]">
        <Svg w={26} h={26}><path d="M0 3H2M4 3H25M0 12H2M4 12H25M0 21H2M4 21H14" stroke="#b6b8bb" strokeWidth="3.200" /><path d="M17 17L25 26M25 17L17 26" stroke="#b6b8bb" strokeWidth="1.800" /></Svg>
      </span>
      <span className="ml-[18px]"><Broom /></span>
      <span className="ml-[15px]"><Folder color={ORANGE} /></span>
      <span className="ml-[13px]"><Floppy /></span>
      <span className="ml-[12px]">
        <Svg w={29} h={30}><path d="M15 7H1V22H15M21 7H28V22H21" stroke="#b0b2b5" strokeWidth="1.800" /><rect x="4" y="11" width="11" height="7" fill="#bfc1c3" /><path d="M18 3V27M13 1C16 1 18 2 18 4C18 2 20 1 23 1M13 29C16 29 18 28 18 26C18 28 20 29 23 29" stroke="#a6a8ab" strokeWidth="1.800" /></Svg>
      </span>
      <span className="ml-[11px]"><Caret color="#55575a" w={12} h={8} /></span>
    </div>
  );
}

function Field({ label }: { label: string }) {
  return (
    <div className="mb-[9.8px] ml-[8px] w-[827px]">
      <label className="block h-[38px] whitespace-nowrap text-[21px] leading-[30px] tracking-[-0.5px] text-[#1c1c1e]">{label}</label>
      <div className="h-[35px] border-2 border-[#e7e8ea]" />
    </div>
  );
}

function Settings() {
  return (
    <section className="ml-[9px] flex h-[1198px] w-[878px] shrink-0 flex-col border-2 border-[#d9dbdf]">
      <div className="pl-[12px]"><PanelTitle text="Settings" tracking="tracking-[-0.3px]" /></div>
      <div className="h-[40px] pl-[11px] text-[26px] font-light leading-[31px] tracking-[-1.1px] text-[#4a6b9b]">Parameters</div>
      <div className="flex h-[1090px] overflow-hidden">
        <div className="w-[844px] shrink-0">
          <div className="flex h-[72px] items-center">
            <span className="ml-[9px] w-[73px] text-[21px] tracking-[-0.8px] text-[#1c1c1e]">Label:</span>
            <div className="h-[34px] w-[701px] border-2 border-[#dcdde0] bg-white pl-[3px] text-[21px] leading-[28px] tracking-[-0.6px] text-[#1c1c1e]">Parameters 1</div>
            <div className="ml-[13px] flex h-[41px] w-[38px] items-center justify-center rounded border-2 border-[#dedfe1] bg-[#f1f2f3]">
              <Svg w={28} h={27}><rect x="3" y="1" width="24" height="24" fill="#fff" stroke="#808285" strokeWidth="2" /><path d="M3 4H27" stroke="#b5b6b8" strokeWidth="5" /><path d="M8 13H22M8 17H22" stroke="#42a583" strokeWidth="2" /><path d="M1 26L7 20" stroke="#42a583" strokeWidth="3" /><path d="M2 17H9V24Z" fill="#42a583" /></Svg>
            </div>
          </div>
          <div className="flex h-[45px] items-center bg-[#e3e9f1]">
            <span className="ml-[9px]"><Caret color="#44484c" w={15} h={9} /></span>
            <span className="ml-[21px] text-[22px] tracking-[-0.1px] text-[#1c1c1e]">Parameters</span>
          </div>
          <div className="h-[16px]" />
          <ParamTable />
          <TableTools />
          <Field label="Name:" />
          <Field label="Expression:" />
          <Field label="Description:" />
          <div className="mt-[19px] h-[20px] bg-[#e3e9f1]" />
        </div>
        <div className="flex w-[30px] shrink-0 flex-col">
          <div className="flex h-[29px] items-center justify-center bg-[#f5f6f8]"><Svg w={12} h={8}><path d="M1 7L6 1L11 7" stroke="#c2c4c7" strokeWidth="1.800" /></Svg></div>
          <div className="h-[999px] bg-[#e3e4e6]" />
          <div className="h-[34px] bg-[#fdfdfe]" />
          <div className="flex grow items-center justify-center bg-[#f3f4f5]"><Svg w={12} h={9}><path d="M1 1L6 8L11 1" stroke="#b8babd" strokeWidth="1.800" /></Svg></div>
        </div>
      </div>
    </section>
  );
}

/* ---------- graphics ---------- */

function Magnifier({ sign, box = false }: { sign: '+' | '-'; box?: boolean }) {
  return (
    <Svg w={box ? 30 : 26} h={26}>
      {box && <path d="M8 11H1V24H13" stroke={BLUE} strokeWidth="2" strokeDasharray="4 2" />}
      <g transform={box ? 'translate(5 0)' : ''}>
        <circle cx="10.500" cy="10.500" r="9" fill="#fff" stroke={BLUE} strokeWidth="2.600" />
        <path d={sign === '+' ? 'M5.500 10.500H15.500M10.500 5.500V15.500' : 'M5.500 10.500H15.500'} stroke={BLUE} strokeWidth="2.200" />
        <path d="M16.500 16.500L24 24" stroke={BLUE} strokeWidth="4" />
      </g>
    </Svg>
  );
}

function PlaneIcon({ label, v, h }: { label: string; v: string; h: string }) {
  return (
    <Svg w={27} h={26}>
      <path d="M3 25V3" stroke={v} strokeWidth="2" />
      <path d="M3 0L6 5H0Z" fill={v} />
      <path d="M3 24H23" stroke={h} strokeWidth="2" />
      <path d="M27 24L22 27V21Z" fill={h} />
      <text x="7" y="16" fontSize="19" fill="#909194" fontFamily="Open Sans, sans-serif">{label}</text>
    </Svg>
  );
}

const BLADES = [0, 60, 120, 180, 240, 300];

function Aperture() {
  return (
    <Svg w={26} h={26}>
      <circle cx="13" cy="13" r="12.800" fill={BLUE} />
      <circle cx="13" cy="13" r="5.500" fill="#fbfcfe" />
      {BLADES.map((a) => (
        <path key={a} d="M9.500 7.300H25" stroke="#fbfcfe" strokeWidth="2" transform={`rotate(${a} 13 13)`} />
      ))}
    </Svg>
  );
}

function C({ w, children }: { w: string; children: ReactNode }) {
  return <span className={`flex h-full shrink-0 items-center justify-center ${w}`}>{children}</span>;
}
function Sep({ w }: { w: string }) {
  return <C w={w}><span className="h-[28px] w-px bg-[#cdced1]" /></C>;
}
function Drop({ w = 'w-[24px]' }: { w?: string }) {
  return <C w={w}><Caret w={13} h={8} /></C>;
}

function Eraser({ fill, inner }: { fill: string; inner: string }) {
  return (
    <Svg w={30} h={24}>
      <path d="M2 8C2 5 4 3 8 3H24C27 3 28 6 28 9V17C28 21 26 23 22 23H6C3 23 1 21 1 18Z" fill={fill} stroke={fill === BLUE ? BLUE : '#b4b5b7'} strokeWidth="1.500" />
      <path d="M1 14H28" stroke={fill === BLUE ? '#3c78b0' : '#c3c4c6'} />
      <rect x="10" y="0" width="15" height="12" fill="#fff" stroke={BLUE} strokeWidth="1.800" strokeDasharray="3 2" />
      <rect x="13" y="3" width="9" height="7" fill={inner} />
    </Svg>
  );
}

function WireCube({ fill = 'none' }: { fill?: string }) {
  return (
    <Svg w={26} h={23}>
      <path d="M1 1H19L25 6V22H8L1 17Z" fill={fill} stroke={BLUE} strokeWidth="1.800" />
      <path d="M1 1L7 6H25M7 6V21M19 1V16L25 21M1 16H19" stroke={BLUE} strokeWidth={fill === 'none' ? 1.7 : 1} />
      {fill !== 'none' && <rect x="8" y="7" width="11" height="9" fill="#cfc8e8" />}
    </Svg>
  );
}

function GraphicsToolbar() {
  return (
    <div className="flex flex-col pl-[6px]">
      <div className="flex h-[30px] items-center">
        <C w="w-[41px]"><Magnifier sign="+" /></C>
        <C w="w-[41px]"><Magnifier sign="-" /></C>
        <C w="w-[41px]"><Magnifier sign="+" box /></C>
        <Drop w="w-[28px]" />
        <C w="w-[50px]">
          <Svg w={28} h={26}><rect x="6.500" y="5" width="15" height="16" fill="#fff" stroke="#77797c" strokeWidth="1.800" /><path d="M10 13H18M14 9V17" stroke="#55575a" strokeWidth="1.600" /><path d="M14 0L17 3H11ZM14 26L17 23H11ZM0 13L4 10V16ZM28 13L24 10V16Z" fill={BLUE} /></Svg>
        </C>
        <C w="w-[32px]">
          <Svg w={28} h={27}><rect x="1" y="1" width="26" height="25" fill="#fff" stroke="#6d6f72" strokeWidth="2" /><path d="M10 13.500H18M14 9.500V17.500" stroke="#55575a" strokeWidth="1.600" /><path d="M14 2.500L18 7H10ZM14 24.500L18 20H10ZM2.500 13.500L8 9V18ZM25.500 13.500L20 9V18Z" fill={BLUE} /></Svg>
        </C>
        <Sep w="w-[27px]" />
        <C w="w-[29px]">
          <Svg w={30} h={26}><path d="M13 24V4" stroke={BLUE} strokeWidth="2" /><path d="M13 0L16 6H10Z" fill={BLUE} /><path d="M13 24L3 14" stroke={GREEN} strokeWidth="2" /><path d="M0 11H7L1 18Z" fill={GREEN} /><path d="M13 24L27 14" stroke={MAGENTA} strokeWidth="2" /><path d="M30 11L29 18L23 12Z" fill={MAGENTA} /></Svg>
        </C>
        <Drop w="w-[36px]" />
        <C w="w-[46px]"><PlaneIcon label="xy" v={GREEN} h={MAGENTA} /></C>
        <C w="w-[37px]"><PlaneIcon label="yz" v={BLUE} h={GREEN} /></C>
        <C w="w-[43px]"><PlaneIcon label="xz" v={BLUE} h={MAGENTA} /></C>
        <C w="w-[39px]">
          <Svg w={26} h={22}><rect x="0" y="0" width="11" height="22" rx="2" fill={BLUE} /><path d="M12 8H17L20 5H25V19H20L17 15H12Z" fill="#b8d7f3" stroke={BLUE} strokeWidth="1.800" /><path d="M17 8V15M21 5V19" stroke={BLUE} strokeWidth="1.500" /></Svg>
        </C>
        <Sep w="w-[18px]" />
        <C w="w-[39px]">
          <Svg w={24} h={26}><path d="M13 5C6 4 2 9 2 15C2 21 7 25 12 25C18 25 22 20 22 15" stroke={BLUE} strokeWidth="2.200" /><path d="M13 0L23 6L13 12Z" fill={BLUE} /></Svg>
        </C>
        <Drop />
        <Sep w="w-[28px]" />
        <C w="w-[29px]">
          <Svg w={29} h={29}><rect x="1" y="1" width="20" height="17" rx="3" fill="#dfe0e1" stroke="#a6a8ab" strokeWidth="1.600" /><rect x="8" y="11" width="20" height="17" rx="3" fill={BLUE} /><path d="M11 13C8 17 8 22 11 26" stroke="#a9d0f2" strokeWidth="1.500" /></Svg>
        </C>
        <Drop w="w-[38px]" />
        <Sep w="w-[15px]" />
        <C w="w-[40px]"><Eraser fill="#e4e4e5" inner="#4788c2" /></C>
        <Drop w="w-[26px]" />
        <C w="w-[56px]"><Eraser fill={BLUE} inner="#cfe2f3" /></C>
        <Drop w="w-[11px]" />
      </div>
      <div className="mt-[4px] flex h-[36px] items-center">
        <C w="w-[41px]"><SelectBox /></C>
        <C w="w-[41px]"><SelectBox broom /></C>
        <Sep w="w-[15px]" />
        <C w="w-[42px]">
          <Svg w={26} h={18}><path d="M1 9C7 1 19 1 25 9C19 17 7 17 1 9Z" fill="#d5d6d7" stroke="#a6a8ab" strokeWidth="1.500" /><circle cx="13" cy="9" r="4" fill="#9b9da0" /><path d="M5 0L22 18" stroke={BLUE} strokeWidth="2" /></Svg>
        </C>
        <C w="w-[39px]">
          <Svg w={28} h={28}><path d="M7 2V9H14" stroke={BLUE} strokeWidth="2.400" /><path d="M7 8C10 1 20 0 22 7C23 12 20 15 16 16" stroke={BLUE} strokeWidth="2.600" /><ellipse cx="7" cy="24" rx="6" ry="3.500" fill={BLUE} /><circle cx="7" cy="24" r="1.500" fill="#fff" /><path d="M19 20L27 27" stroke="#a6b8c8" strokeWidth="3" /></Svg>
        </C>
        <C w="w-[45px]">
          <Svg w={29} h={24}><rect x="1" y="1" width="27" height="22" fill="#fff" stroke={BLUE} strokeWidth="2" /><path d="M1 5H28" stroke={BLUE} strokeWidth="2" /><ellipse cx="14.500" cy="14" rx="8" ry="4.500" fill="#dcebf8" stroke={BLUE} strokeWidth="1.600" /><circle cx="14.500" cy="14" r="2.800" fill={BLUE} /></Svg>
        </C>
        <Drop w="w-[22px]" />
        <Sep w="w-[30px]" />
        <C w="w-[24px]">
          <Svg w={27} h={27}><path d="M1 2H19L26 8V25H8L1 19Z" stroke="#7c7e81" strokeWidth="1.700" /><path d="M1 2L8 8H26M8 8V25M1 19H19L26 25M19 2V19" stroke="#7c7e81" strokeWidth="1.500" /><path d="M13 0L20 6V28L13 21Z" fill="#8fb9e0" fillOpacity="0.500" stroke={BLUE} strokeWidth="1.500" /></Svg>
        </C>
        <Drop w="w-[42px]" />
        <Sep w="w-[11px]" />
        <C w="w-[79px]">
          <span className="flex h-[33px] w-[65px] items-center rounded border-2 border-[#4f92d2] bg-[#a7cff5] pl-[4px]">
            <Svg w={22} h={18}><path d="M0 5H6L15 0V18L6 13H0Z" fill={BLUE} /><path d="M15 3C21 4 21 14 15 15Z" fill="#fff" /></Svg>
            <span className="ml-[15px]"><Caret w={13} h={8} /></span>
          </span>
        </C>
        <C w="w-[36px]"><WireCube fill="#a9c8ea" /></C>
        <Drop w="w-[31px]" />
        <C w="w-[46px]"><WireCube /></C>
        <C w="w-[40px]">
          <span className="flex h-[33px] w-[33px] items-center justify-center rounded border-2 border-[#4f92d2] bg-[#8fbfee]">
            <Svg w={26} h={26}><rect x="1" y="1" width="24" height="24" fill="#a7cff5" stroke="#5f7f9f" strokeWidth="1.500" /><path d="M13 20V8M10 10L13 6L16 10" stroke={BLUE} strokeWidth="1.700" /><path d="M13 20L6 14" stroke={GREEN} strokeWidth="2" /><path d="M13 20L20 15" stroke={MAGENTA} strokeWidth="2" /><circle cx="6" cy="13" r="2" fill={GREEN} /><circle cx="21" cy="13" r="2" fill={MAGENTA} /></Svg>
          </span>
        </C>
        <C w="w-[41px]">
          <span className="flex h-[33px] w-[33px] items-center justify-center rounded border-2 border-[#4f92d2] bg-[#8fbfee]">
            <Svg w={26} h={26}><rect x="1" y="1" width="24" height="24" fill="#a7cff5" stroke="#4f80b0" strokeWidth="1.500" /><path d="M6 6H20V20H6ZM6 10.700H20M6 15.300H20M10.700 6V20M15.300 6V20" fill="#fff" stroke={BLUE} strokeWidth="1.400" /></Svg>
          </span>
        </C>
        <Sep w="w-[15px]" />
        <C w="w-[38px]">
          <Svg w={26} h={28}><path d="M1 1H17L25 5V13H7L1 9Z" fill="#e2e3e4" stroke="#a6a8ab" strokeWidth="1.500" /><rect x="6" y="5" width="19" height="8" fill="#9cc8f0" stroke={BLUE} strokeWidth="1.700" /><circle cx="15" cy="21.500" r="5.700" fill="#fff" stroke="#c2284e" strokeWidth="2" /><path d="M11 25.500L19 17.500" stroke="#c2284e" strokeWidth="1.800" /></Svg>
        </C>
        <C w="w-[47px]">
          <Svg w={26} h={28}><path d="M13 1C21 0 25 6 25 13C25 21 20 27 10 27C3 27 0 23 2 19C3 17 6 18 7 15C8 13 4 12 4 8C5 4 8 1 13 1Z" fill="#dededf" stroke="#7f8083" strokeWidth="1.600" /><rect x="7" y="5" width="7" height="7" rx="2" fill="#fff" stroke="#7f8083" strokeWidth="1.400" /><circle cx="19" cy="13" r="2.200" fill={BLUE} /><circle cx="15" cy="18" r="2.500" fill="#df7b3c" /><circle cx="8" cy="22" r="2.200" fill="#c2284e" /></Svg>
        </C>
        <Drop w="w-[18px]" />
        <Sep w="w-[36px]" />
        <C w="w-[20px]"><Aperture /></C>
        <Drop w="w-[46px]" />
      </div>
      <div className="flex h-[36px] items-center">
        <C w="w-[41px]">
          <Svg w={29} h={22}><path d="M0 3H8L10 0H19L21 3H29V22H0Z" fill={BLUE} /><circle cx="15" cy="12" r="6" fill={BLUE} stroke="#dcebf8" strokeWidth="2" /><rect x="3" y="6" width="3" height="3" fill="#fff" /></Svg>
        </C>
        <C w="w-[41px]">
          <Svg w={25} h={28}><rect x="5" y="1" width="15" height="9" fill="#fff" stroke={BLUE} strokeWidth="1.800" /><rect x="1" y="9" width="23" height="13" rx="3" fill="#b7d3ef" stroke={BLUE} strokeWidth="1.800" /><rect x="5" y="18" width="15" height="9" fill="#fff" stroke={BLUE} strokeWidth="1.800" /></Svg>
        </C>
      </div>
    </div>
  );
}

/* 3D view of the bracket with its axes; coordinates are window pixels. */
function BusbarPlot() {
  return (
    <svg width="845" height="598" viewBox="1561 467 845 598" fill="none" className="block">
      <defs>
        <linearGradient id="bend" x1="2067" y1="830" x2="2079" y2="815" gradientUnits="userSpaceOnUse">
          <stop offset="0" stopColor="#d0cecf" />
          <stop offset="0.500" stopColor="#8f8e8f" />
          <stop offset="1" stopColor="#cfcdce" />
        </linearGradient>
        <linearGradient id="side" x1="1910" y1="950" x2="2120" y2="850" gradientUnits="userSpaceOnUse">
          <stop offset="0" stopColor="#8d8c8d" />
          <stop offset="0.500" stopColor="#a5a4a5" />
          <stop offset="1" stopColor="#8d8c8d" />
        </linearGradient>
      </defs>
      <g stroke="#9c9da1" strokeWidth="1.500">
        <path d="M2051 564L1815 644L1820.700 767L1826 894" />
        <path d="M1931.700 605.500L1932.800 725.700L1935 835" />
        <path d="M1820.700 767L2035 688" />
        <path d="M2067 565.500L2154.800 615.400M2101.500 585V601M2137 606L2136 622M2041.500 567V574" />
        <path d="M2132 726L2149 736M2128.700 840L2145 850.500M2109.500 866L2125 878M2006.400 913L2020.500 923.600" />
        <path d="M1832 908L1909.600 972.500M1863 933L1878.400 927M1894.300 959L1909.600 952.500" />
      </g>
      <g stroke="#1d1d1f" strokeWidth="1.800" strokeLinejoin="round">
        <path d="M2038 575L2124.700 626L2118 841L2034.700 784.500Z" fill="#d5d3d4" />
        <path d="M2038 575L2041 571.500L2048 572L2135.500 621.700L2124.700 626.500Z" fill="#e6e5e3" />
        <path d="M2025.700 798.600L1832 876.300L1909.600 940L2106 856.700Z" fill="#d2d0d1" />
        <path d="M2034.700 784.500C2034 791 2031 796 2025.700 798.600L2106 856.700C2113 853 2117 848 2118 839Z" fill="url(#bend)" />
        <path d="M2135.500 621.700L2128.700 839C2128 852 2122 861 2110.600 866L1909.600 951.700V940L2106 856.700C2114 852 2118 847 2118 839L2124.700 626.500Z" fill="url(#side)" />
        <path d="M1832 876.300L1909.600 940V951.700L1831 888Z" fill="#dfdedc" />
        <ellipse cx="1883.500" cy="878.500" rx="16.500" ry="9.800" />
        <ellipse cx="1923" cy="909.600" rx="16.500" ry="10.200" />
        <ellipse cx="2077.700" cy="708.700" rx="10" ry="16.500" transform="rotate(-14 2077.700 708.700)" />
      </g>
      <g fontFamily="DejaVu Sans, sans-serif" fontSize="21" fill="#222326">
        <text x="2161.500" y="507" fill="#111">m</text>
        <text x="2101.500" y="569.500">-0.02</text>
        <text x="2177" y="625.500">0.1</text>
        <text x="2171" y="747.500">0.05</text>
        <text x="2240.500" y="755">m</text>
        <text x="2165.500" y="860.500">0</text>
        <text x="2127" y="912.500">0.1</text>
        <text x="2017" y="958">0.05</text>
        <text x="1915" y="1006.500">0</text>
        <text x="2060.500" y="1018">m</text>
        <text x="1623" y="958">z</text>
        <text x="1590.500" y="980.500">y</text>
        <text x="1665" y="986.500">x</text>
      </g>
      <path d="M1628 998V972" stroke="#5580b4" strokeWidth="2.200" />
      <path d="M1628 963L1632.500 974H1623.500Z" fill="#5580b4" />
      <path d="M1628 998L1611 987" stroke={GREEN} strokeWidth="2.500" />
      <path d="M1603 981.500L1613.500 983L1608 991Z" fill={GREEN} />
      <path d="M1628 998L1652 989" stroke={MAGENTA} strokeWidth="2.500" />
      <path d="M1661 985.500L1653 993L1649.500 984.500Z" fill={MAGENTA} />
    </svg>
  );
}

function Graphics() {
  return (
    <section className="flex h-[768px] w-[849px] shrink-0 flex-col border-2 border-[#d9dbdf]">
      <div className="-mb-[5px] -mr-px pl-[12px]"><PanelTitle text="Graphics" tracking="tracking-[-0.65px]" /></div>
      <GraphicsToolbar />
      <div className="relative h-[598px] bg-linear-to-b from-[#fcfdff] via-[#f3f8ff] via-45% to-[#e7f1fb]">
        <BusbarPlot />
        <div className="absolute right-[8px] top-[13px]"><Logo s={38} /></div>
      </div>
    </section>
  );
}

/* Left edge of the docked window that continues past the screen. */
function DockedEdge() {
  return (
    <section className="ml-[9px] flex h-[768px] w-5 shrink-0 flex-col overflow-hidden border-2 border-r-0 border-[#d9dbdf]">
      <div className="h-[74px] pl-[12px] text-[35px] font-light leading-[67px] text-[#4a6b9b]">A</div>
      <div className="ml-[14px] h-px shrink-0 bg-[#cdced1]" />
      <div className="ml-[14px] mt-[35px] h-px shrink-0 bg-[#cdced1]" />
      <div className="ml-[7px] mt-[38px] h-[34px] shrink-0 border-2 border-r-0 border-[#dcdde0]" />
      <div className="mb-[7px] ml-[7px] mt-[11px] grow border-2 border-r-0 border-[#dcdde0] bg-white" />
    </section>
  );
}

function TabX() {
  return <Svg w={16} h={15}><path d="M1 1L15 14M15 1L1 14" stroke="#c9cacc" strokeWidth="1.800" /></Svg>;
}

function Messages() {
  return (
    <section className="mt-[9px] flex h-[421px] flex-col border-2 border-r-0 border-[#d9dbdf]">
      <div className="flex h-[53px] text-[22px] tracking-[-0.35px] text-[#1c1c1e]">
        <div className="mt-[9px] w-[7px] border-b-2 border-[#d9dbdf]" />
        <div className="mt-[9px] flex w-[160px] items-center border-2 border-b-0 border-[#d9dbdf] pl-[7px] text-[#3f5f95]">
          <span className="w-[107px] pt-[2px] tracking-[0.4px]">Messages</span>
          <span className="mb-[2px] ml-[13px]"><TabX /></span>
        </div>
        <div className="flex grow items-end border-b-2 border-[#d9dbdf] pl-[15px]">
          <div className="h-[42px] w-[108px] bg-[#ebebed] pt-px text-center leading-[42px]">Progress</div>
          <div className="ml-[15px] h-[42px] w-[54px] bg-[#ebebed] pt-px text-center leading-[42px]">Log</div>
          <div className="ml-[14px] flex h-[42px] w-[106px] items-center bg-[#ebebed] pl-[7px]">
            <span className="w-[57px] pt-px">Table</span>
            <span className="mb-1 ml-[13px]"><TabX /></span>
          </div>
        </div>
      </div>
      <div className="flex h-[50px] items-center pl-[17px] pt-[2px]">
        <Broom small />
        <span className="ml-[14px] flex h-[34px] w-[34px] items-center justify-center rounded border-2 border-[#4f92d2] bg-[#8fc3f2]">
          <Svg w={26} h={26}><path d="M2 2H23V18H2Z" fill="#e5f1fb" stroke={BLUE} strokeWidth="1.800" /><path d="M2 6H23" stroke={BLUE} strokeWidth="2" /><rect x="8" y="12" width="17" height="12" fill="#fff" stroke={BLUE} strokeWidth="1.800" /><path d="M8 12L16.500 19L25 12M8 24L14 18M25 24L19 18" stroke={BLUE} strokeWidth="1.300" /></Svg>
        </span>
      </div>
      <div className="ml-[7px] flex h-[307px] flex-col overflow-hidden border-2 border-r-0 border-[#dcdde0]">
        <div className="grow pl-[3px] text-[21px] leading-[27px] text-[#1c1c1e]">
          <p className="tracking-[-0.28px]">COMSOL Multiphysics 6.0.0.405</p>
          <p className="whitespace-nowrap tracking-[-0.18px]">[Feb 19, 2024, 4:48 PM] Opened file: C:\Program Files\COMSOL\COMSOL60\Multiphysics_c</p>
        </div>
        <div className="flex h-[31px] shrink-0">
          <div className="flex w-[30px] items-center justify-center bg-[#f6f7f8]"><Svg w={9} h={14}><path d="M8 1L1.500 7L8 13" stroke="#c2c4c7" strokeWidth="1.800" /></Svg></div>
          <div className="grow bg-[#e3e4e6]" />
        </div>
      </div>
    </section>
  );
}

export default function App() {
  return (
    <div className="flex h-[1552px] w-[2438px] flex-col overflow-hidden bg-[#fbfcfe] font-['Open_Sans',sans-serif]">
      <div className="h-[6px] shrink-0 bg-[#767676]" />
      <header className="flex h-[40px] shrink-0 items-start bg-white pl-[4px]">
        <span className="pt-[2px]"><Logo s={26} /></span>
        <h1 className="ml-[1185px] whitespace-nowrap text-[21px] leading-[29px] tracking-[-0.04px] text-[#1c1c1e]">busbar_geom.mph - COMSOL Multiphysics</h1>
      </header>
      <MenuTabs />
      <Ribbon />
      <QuickAccess />
      <main className="flex h-[1206px] shrink-0 pl-[6px] pt-[7px]">
        <ModelBuilder />
        <Settings />
        <div className="ml-[9px] flex grow flex-col">
          <div className="flex">
            <Graphics />
            <DockedEdge />
          </div>
          <Messages />
        </div>
      </main>
      <footer className="flex grow items-center pl-[1687px] pt-[14px] text-[21px] tracking-[-1.1px] text-[#1c1c1e]">1.12 GB | 1.2 GB</footer>
    </div>
  );
}
